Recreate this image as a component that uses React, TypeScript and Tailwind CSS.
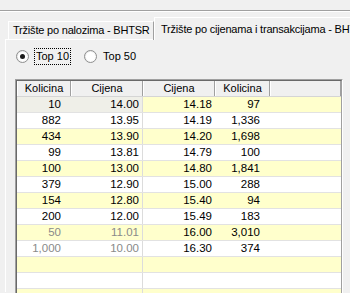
import React from "react";

type Row = { c: string[]; grayLeft?: boolean };

const rows: Row[] = [
  { c: ["10", "14.00", "14.18", "97"] },
  { c: ["882", "13.95", "14.19", "1,336"] },
  { c: ["434", "13.90", "14.20", "1,698"] },
  { c: ["99", "13.81", "14.79", "100"] },
  { c: ["100", "13.00", "14.80", "1,841"] },
  { c: ["379", "12.90", "15.00", "288"] },
  { c: ["154", "12.80", "15.40", "94"] },
  { c: ["200", "12.00", "15.49", "183"] },
  { c: ["50", "11.01", "16.00", "3,010"], grayLeft: true },
  { c: ["1,000", "10.00", "16.30", "374"], grayLeft: true },
  { c: ["", "", "", ""] },
  { c: ["", "", "", ""] },
  { c: ["", "", "", ""] },
];

function Radio({ checked }: { checked?: boolean }) {
  return (
    <div className="w-[13px] h-[13px] rounded-full border border-[#8e8f8f] bg-gradient-to-br from-[#e6e6e6] to-[#ffffff] flex items-center justify-center">
      <div className="w-[9px] h-[9px] rounded-full bg-white flex items-center justify-center">
        {checked && <div className="w-[5px] h-[5px] rounded-full bg-[#1a1a1a]" />}
      </div>
    </div>
  );
}

export default function App() {
  return (
    <div
      className="w-[350px] h-[293px] overflow-hidden bg-[#f0f0f0] text-black text-[11px] leading-none"
      style={{ fontFamily: '"Liberation Sans", Arial, sans-serif' }}
    >
      <div className="h-[10px]" />
      <div className="border-t border-[#a0a0a0]" />
      <div className="border-t border-white" />
      {/* tabs */}
      <div className="flex items-end h-[28px] pl-[8px]">
        <div className="w-[146px] h-[19px] border-t border-l border-r border-t-white border-l-white border-r-[#a0a0a0] flex items-center pl-[4px] pb-[1px] whitespace-nowrap overflow-hidden tracking-[-0.2px]">
          Tržište po nalozima - BHTSR
        </div>
        <div className="flex-1 h-[23px] border-t border-l border-white flex items-start pt-[6px] pl-[6px] whitespace-nowrap overflow-hidden tracking-[-0.2px] bg-[#f0f0f0]">
          Tržište po cijenama i transakcijama - BHTSR
        </div>
      </div>
      {/* panel */}
      <div className="ml-[5px] border-l border-white h-[253px]">
        <div className="h-0 w-[148px] border-t border-white -mt-px" />
        {/* radios */}
        <div className="flex items-center h-[17px] mt-[8px] pl-[10px]">
          <Radio checked />
          <div className="ml-[5px] h-[17px] px-[1px] border border-dotted border-black flex items-center">
            Top 10
          </div>
          <div className="ml-[13px]">
            <Radio />
          </div>
          <div className="ml-[5px] h-[17px] px-[1px] flex items-center">Top 50</div>
        </div>
        {/* table */}
        <div className="ml-[9px] mt-[14px] w-[328px] border-t border-l border-[#a0a0a0] border-r border-r-white">
          <div className="border-t border-l border-[#696969] border-r border-r-[#a0a0a0]">
            <div className="grid grid-cols-[54px_72px_72px_55px_71px] h-[16px] bg-[#f0f0f0] border-b border-[#d5d5d5]">
              {["Kolicina", "Cijena", "Cijena", "Kolicina", ""].map((h, i) => (
                <div
                  key={i}
                  className="flex items-center justify-center border-r border-[#a0a0a0] border-l border-l-white"
                >
                  {h}
                </div>
              ))}
            </div>
            {rows.map((r, ri) => {
              const yellow = ri % 2 === 0;
              const bg = yellow ? "bg-[#ffffcc]" : "bg-white";
              const leftBg = ri === 0 ? "bg-[#efefe8]" : bg;
              const leftColor = r.grayLeft ? "text-[#8a8a8a]" : "text-black";
              return (
                <div
                  key={ri}
                  className="grid grid-cols-[54px_72px_72px_55px_71px] h-[16px] border-b border-[#e2e2e2] text-[11.5px]"
                >
                  <div className={`${leftBg} ${leftColor} flex items-center justify-end pr-[10px]`}>
                    {r.c[0]}
                  </div>
                  <div className={`${leftBg} ${leftColor} flex items-center justify-end pr-[3px] border-r border-[#dcdcdc]`}>
                    {r.c[1]}
                  </div>
                  <div className={`${bg} flex items-center justify-end pr-[3px]`}>{r.c[2]}</div>
                  <div className={`${bg} flex items-center justify-end pr-[10px]`}>{r.c[3]}</div>
                  <div className={bg} />
                </div>
              );
            })}
          </div>
        </div>
      </div>
    </div>
  );
}
